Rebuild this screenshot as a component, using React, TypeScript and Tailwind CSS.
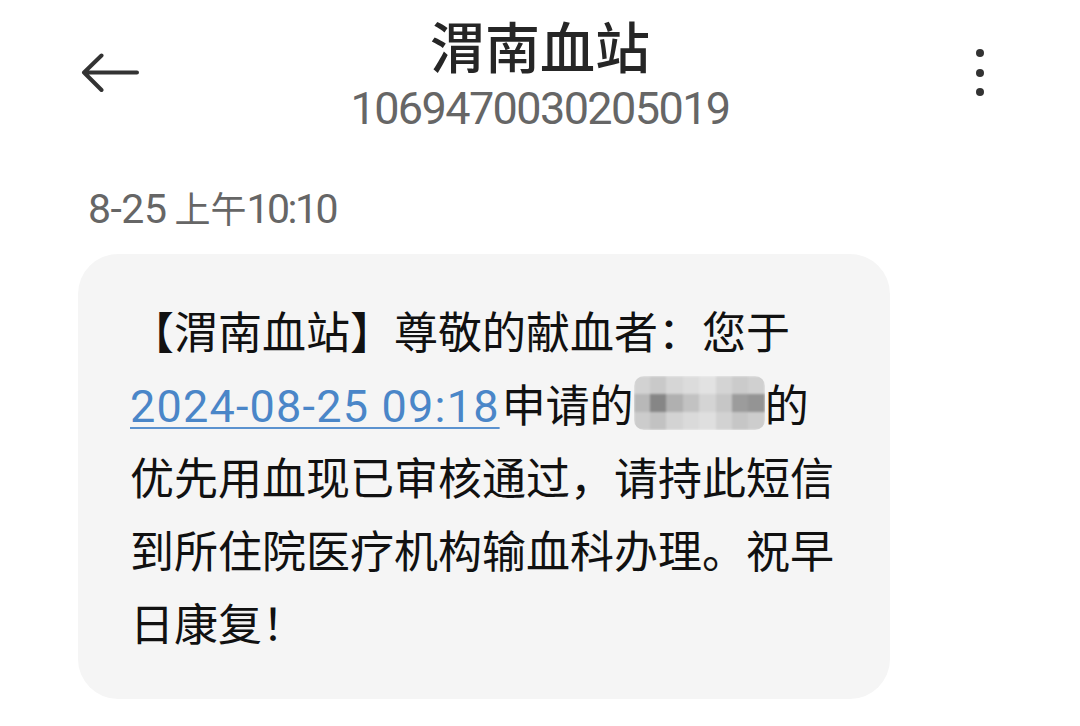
import React from "react";

const mosaic: string[] = [
  "bg-[#d2d2d2]", "bg-[#c9c9c9]", "bg-[#d6d6d6]", "bg-[#dcdcdc]", "bg-[#e2e2e2]", "bg-[#d4d4d4]", "bg-[#cbcbcb]", "bg-[#d0d0d0]",
  "bg-[#b8b8b8]", "bg-[#868686]", "bg-[#b0b0b0]", "bg-[#c2c2c2]", "bg-[#d4d4d4]", "bg-[#c6c6c6]", "bg-[#9c9c9c]", "bg-[#949494]",
  "bg-[#cccccc]", "bg-[#c2c2c2]", "bg-[#d3d3d3]", "bg-[#dadada]", "bg-[#dfdfdf]", "bg-[#d2d2d2]", "bg-[#c6c6c6]", "bg-[#cdcdcd]",
];

export default function App() {
  return (
    <div className="w-[1080px] h-[726px] bg-white overflow-hidden font-['Noto_Sans_CJK_SC',sans-serif]">
      {/* Header */}
      <div className="grid grid-cols-[1fr_auto_1fr]">
        <div className="pl-[80px] pt-[53px]">
          <svg width="60" height="40" viewBox="0 0 60 40" fill="none">
            <path
              d="M57 19.5 H4 M21.5 2.5 L4 19.5 L21.5 37"
              stroke="#333333"
              strokeWidth="4"
              strokeLinecap="round"
              strokeLinejoin="round"
            />
          </svg>
        </div>
        <div className="flex flex-col items-center pt-[12px]">
          <div className="text-[55px] leading-[64px] font-medium text-[#262626]">渭南血站</div>
          <div className="mt-[8px] font-['Roboto',sans-serif] text-[45px] leading-[50px] tracking-[-1.6px] text-[#666666]">
            1069470030205019
          </div>
        </div>
        <div className="flex justify-end pr-[96px] pt-[49px]">
          <div className="flex flex-col gap-[11.5px]">
            <span className="block w-[8px] h-[8px] rounded-full bg-[#333333]" />
            <span className="block w-[8px] h-[8px] rounded-full bg-[#333333]" />
            <span className="block w-[8px] h-[8px] rounded-full bg-[#333333]" />
          </div>
        </div>
      </div>

      {/* Timestamp */}
      <div className="mt-[51px] pl-[88px] h-[44px] leading-[44px] text-[#666666] whitespace-nowrap">
        <span className="font-['Roboto',sans-serif] text-[41px] tracking-[-0.5px]">8-25</span>
        <span className="text-[36px] ml-[8px]">上午</span>
        <span className="font-['Roboto',sans-serif] text-[41px] tracking-[-2.5px]">10:10</span>
      </div>

      {/* Bubble */}
      <div className="mt-[25px] ml-[78px] w-[812px] h-[445px] rounded-[40px] bg-[#f5f5f5] pl-[52px] pt-[40px]">
        <div className="text-[44px] leading-[73px] text-[#111111] whitespace-nowrap">
          【渭南血站】尊敬的献血者：您于
          <br />
          <span className="font-['Roboto',sans-serif] text-[45px] leading-[40px] tracking-[1.2px] text-[#4a86c8] underline decoration-[2px] underline-offset-[5px] decoration-[#5b92cf]">
            2024-08-25 09:18
          </span>
          <span className="ml-[2px]">申请的</span>
          <span className="inline-block w-[131px] h-[54px] align-[-8px] rounded-[10px] overflow-hidden">
            <span className="grid grid-cols-8 grid-rows-3 w-full h-full blur-[1px]">
              {mosaic.map((c, i) => (
                <span key={i} className={`block ${c}`} />
              ))}
            </span>
          </span>
          的
          <br />
          优先用血现已审核通过，请持此短信
          <br />
          到所住院医疗机构输血科办理。祝早
          <br />
          日康复！
        </div>
      </div>
    </div>
  );
}
